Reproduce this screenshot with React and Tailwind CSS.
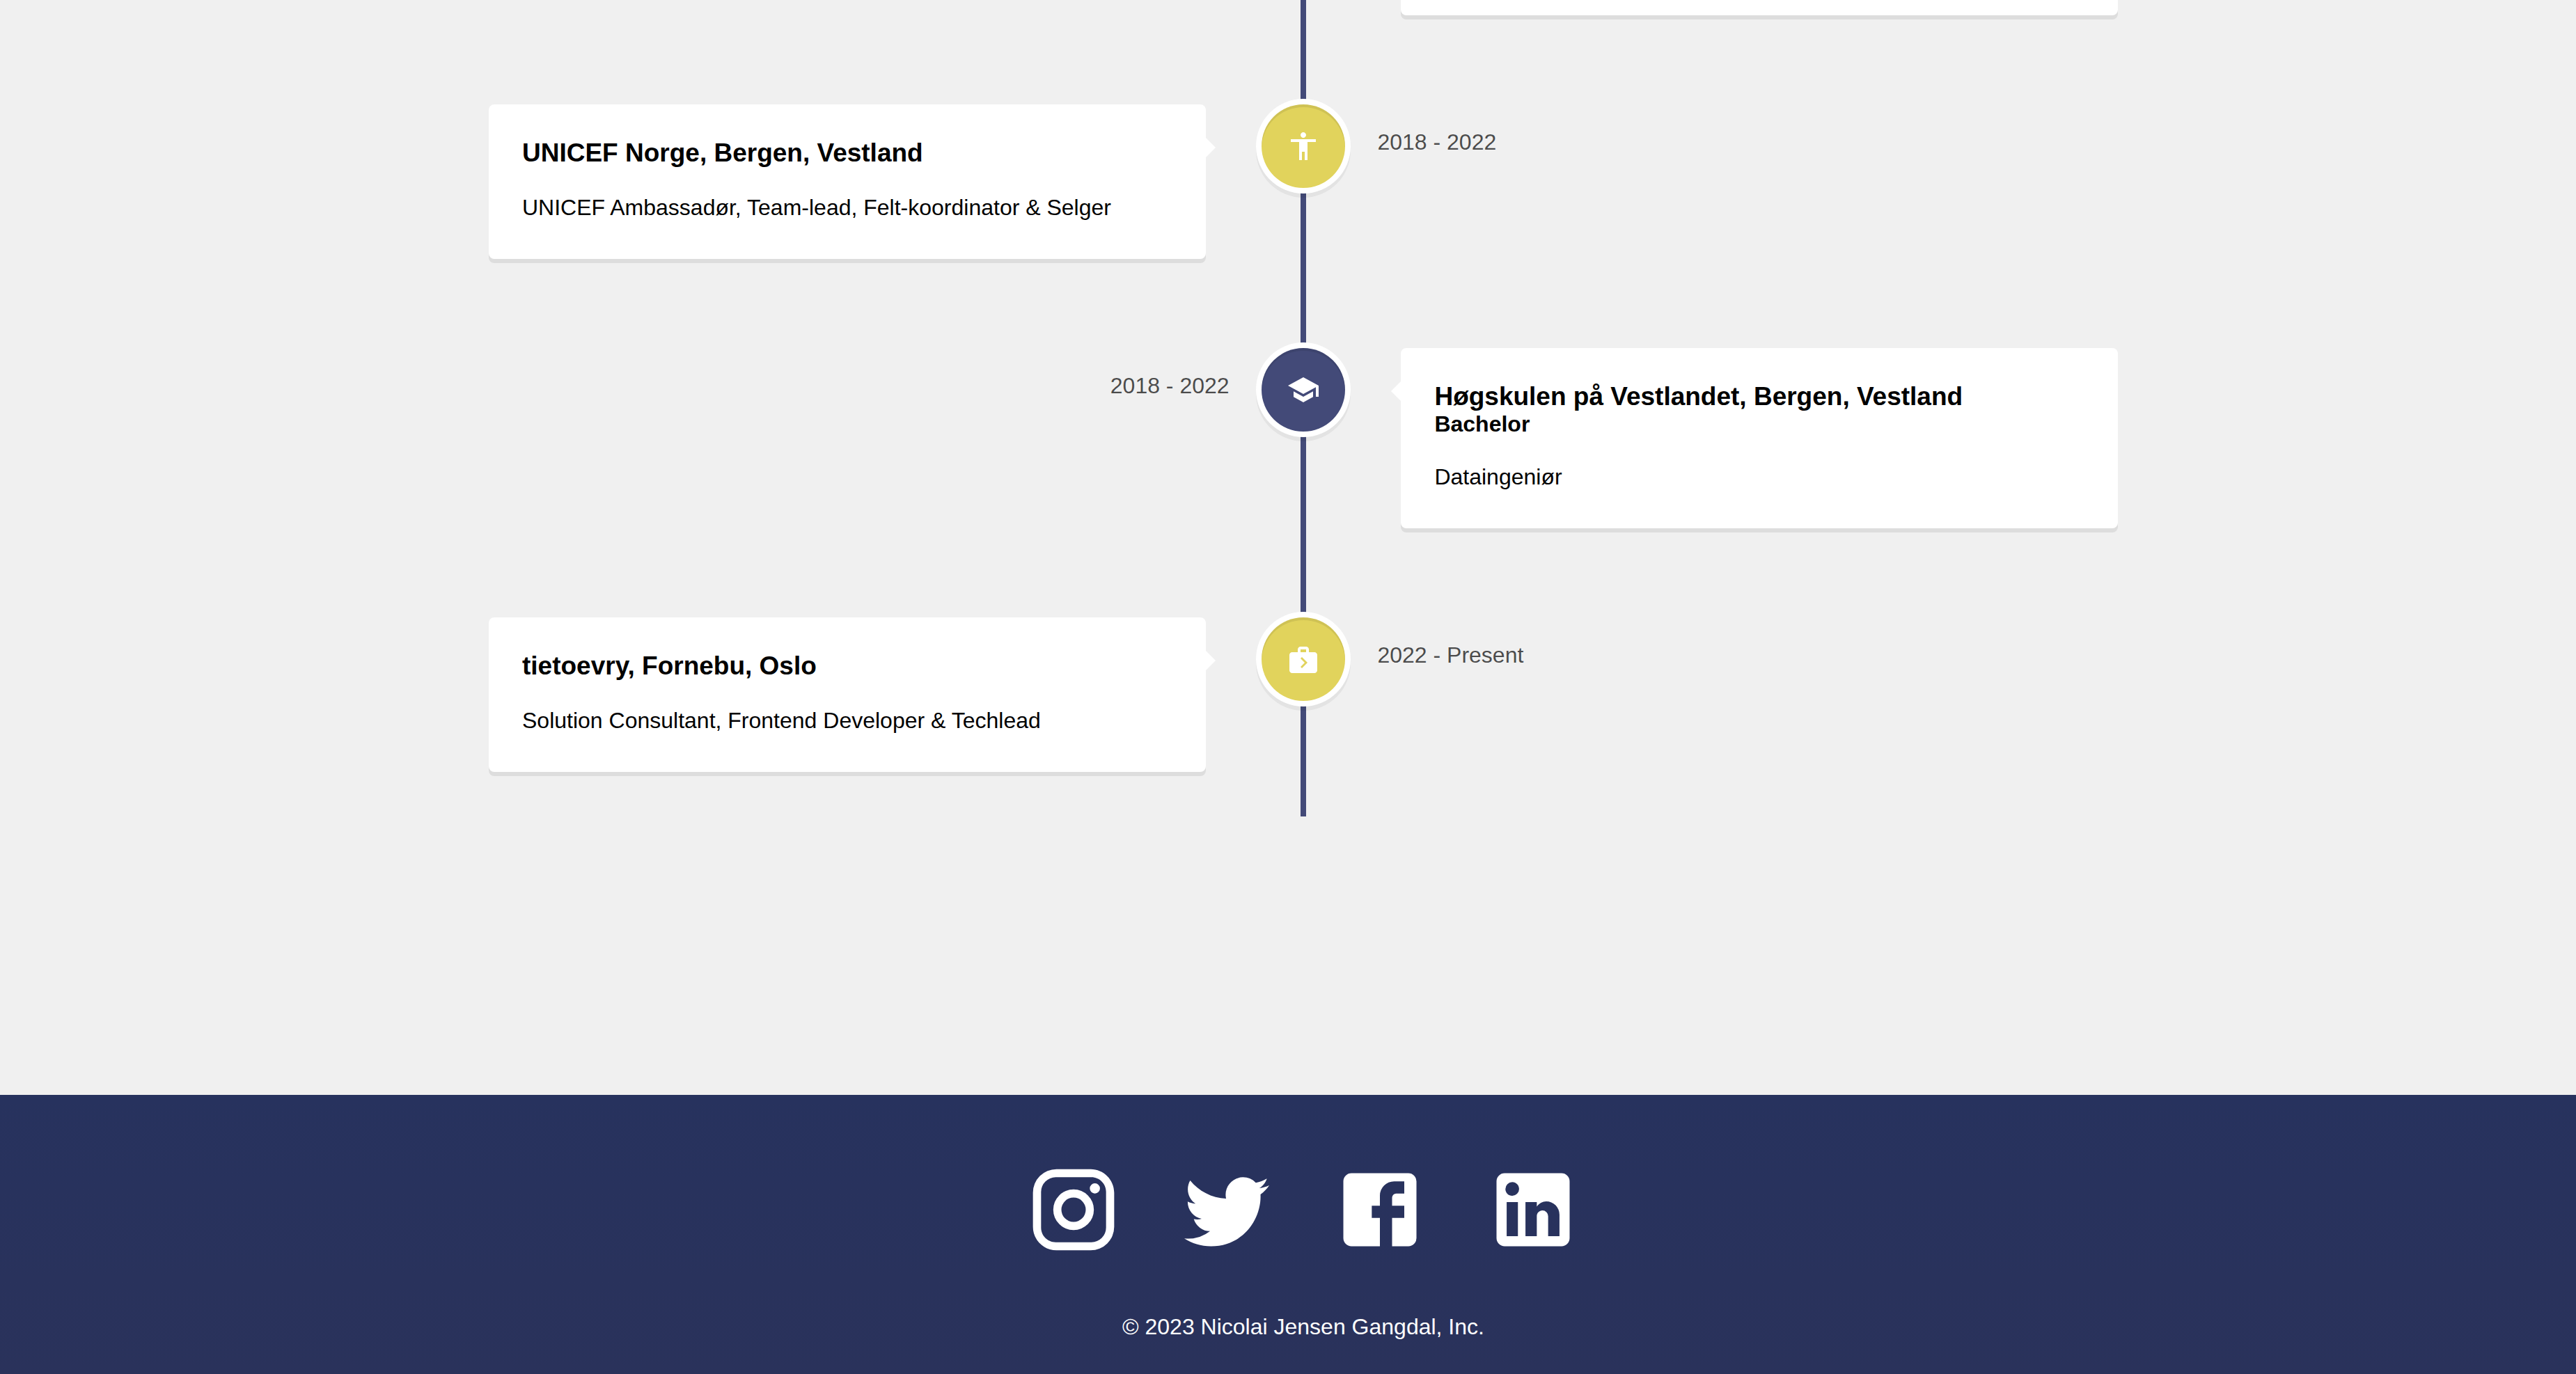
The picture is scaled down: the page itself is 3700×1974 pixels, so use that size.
const entries = [
  {
    side: "left",
    title: "UNICEF Norge, Bergen, Vestland",
    text: "UNICEF Ambassadør, Team-lead, Felt-koordinator & Selger",
    date: "2018 - 2022",
    color: "bg-[#e1d35c]",
    icon: "M12 2c1.1 0 2 .9 2 2s-.9 2-2 2-2-.9-2-2 .9-2 2-2zm9 7h-6v13h-2v-6h-2v6H9V9H3V7h18v2z",
  },
  {
    side: "right",
    title: "Høgskulen på Vestlandet, Bergen, Vestland",
    subtitle: "Bachelor",
    text: "Dataingeniør",
    date: "2018 - 2022",
    color: "bg-[#434a78]",
    icon: "M5 13.18v4L12 21l7-3.82v-4L12 17l-7-3.82zM12 3L1 9l11 6 9-4.91V17h2V9L12 3z",
  },
  {
    side: "left",
    title: "tietoevry, Fornebu, Oslo",
    text: "Solution Consultant, Frontend Developer & Techlead",
    date: "2022 - Present",
    color: "bg-[#e1d35c]",
    icon: "M20 7h-4V5c0-.55-.22-1.05-.59-1.41C15.05 3.22 14.55 3 14 3h-4c-1.1 0-2 .9-2 2v2H4c-1.1 0-2 .9-2 2v11c0 1.1.9 2 2 2h16c1.1 0 2-.9 2-2V9c0-1.1-.9-2-2-2zM10 5h4v2h-4V5zm1 13.5-1-1 3-3-3-3 1-1 4 4-4 4z",
  },
];

const socials = [
  {
    label: "Instagram",
    path: "M7.8 2h8.4C19.4 2 22 4.6 22 7.8v8.4a5.8 5.8 0 0 1-5.8 5.8H7.8C4.6 22 2 19.4 2 16.2V7.8A5.8 5.8 0 0 1 7.8 2m-.2 2A3.6 3.6 0 0 0 4 7.6v8.8C4 18.39 5.61 20 7.6 20h8.8a3.6 3.6 0 0 0 3.6-3.6V7.6C20 5.61 18.39 4 16.4 4H7.6m9.65 1.5a1.25 1.25 0 0 1 1.25 1.25A1.25 1.25 0 0 1 17.25 8 1.25 1.25 0 0 1 16 6.75a1.25 1.25 0 0 1 1.25-1.25M12 7a5 5 0 0 1 5 5 5 5 0 0 1-5 5 5 5 0 0 1-5-5 5 5 0 0 1 5-5m0 2a3 3 0 0 0-3 3 3 3 0 0 0 3 3 3 3 0 0 0 3-3 3 3 0 0 0-3-3z",
  },
  {
    label: "Twitter",
    path: "M22.46 6c-.77.35-1.6.58-2.46.69.88-.53 1.56-1.37 1.88-2.38-.83.5-1.75.85-2.72 1.05C18.37 4.5 17.26 4 16 4c-2.35 0-4.27 1.92-4.27 4.29 0 .34.04.67.11.98C8.28 9.09 5.11 7.38 3 4.79c-.37.63-.58 1.37-.58 2.15 0 1.49.75 2.81 1.91 3.56-.71 0-1.37-.2-1.95-.5v.03c0 2.08 1.48 3.82 3.44 4.21a4.22 4.22 0 0 1-1.93.07 4.28 4.28 0 0 0 4 2.98 8.521 8.521 0 0 1-5.33 1.84c-.34 0-.68-.02-1.02-.06C3.44 20.29 5.7 21 8.12 21 16 21 20.33 14.46 20.33 8.79c0-.19 0-.37-.01-.56.84-.6 1.56-1.36 2.14-2.23z",
  },
  {
    label: "Facebook",
    path: "M5 3h14a2 2 0 0 1 2 2v14a2 2 0 0 1-2 2H5a2 2 0 0 1-2-2V5a2 2 0 0 1 2-2m13 2h-2.5A3.5 3.5 0 0 0 12 8.5V11h-2v3h2v7h3v-7h3v-3h-3V9a1 1 0 0 1 1-1h2V5z",
  },
  {
    label: "LinkedIn",
    path: "M19 3a2 2 0 0 1 2 2v14a2 2 0 0 1-2 2H5a2 2 0 0 1-2-2V5a2 2 0 0 1 2-2h14m-.5 15.5v-5.3a3.26 3.26 0 0 0-3.26-3.26c-.85 0-1.84.52-2.32 1.3v-1.11h-2.79v8.37h2.79v-4.93c0-.77.62-1.4 1.39-1.4a1.4 1.4 0 0 1 1.4 1.4v4.93h2.79M6.88 8.56a1.68 1.68 0 0 0 1.68-1.68c0-.93-.75-1.69-1.68-1.69a1.69 1.69 0 0 0-1.69 1.69c0 .93.76 1.68 1.69 1.68m1.39 9.94v-8.37H5.5v8.37h2.77z",
  },
];

function Card({ entry }) {
  const arrow =
    entry.side === "left"
      ? "left-full border-l-white"
      : "right-full border-r-white";
  return (
    <article className="relative rounded-lg bg-white p-12 shadow-[0_6px_0_#ddd]">
      <span className={`absolute top-12 border-14 border-transparent ${arrow}`} />
      <h3 className="text-[37px] leading-[43px] font-bold">{entry.title}</h3>
      {entry.subtitle && (
        <h4 className="text-[32px] leading-[37px] font-bold">{entry.subtitle}</h4>
      )}
      <p className="mt-8 text-[32px] leading-[51px]">{entry.text}</p>
    </article>
  );
}

/* Date beside the marker, on the side opposite the card. */
function DateLabel({ entry }) {
  return (
    <p
      className={`pt-[30px] text-[32px] leading-[48px] text-black/70 ${
        entry.side === "left" ? "-ml-[34px] text-left" : "-mr-[34px] text-right"
      }`}
    >
      {entry.date}
    </p>
  );
}

function TimelineRow({ entry }) {
  const left = entry.side === "left";
  return (
    <li className="grid grid-cols-[44%_1fr_44%] items-start">
      {left ? <Card entry={entry} /> : <DateLabel entry={entry} />}
      <span
        className={`flex size-[120px] items-center justify-center justify-self-center rounded-full text-white shadow-[0_0_0_8px_#fff,inset_0_4px_0_rgba(0,0,0,0.08),0_6px_0_8px_rgba(0,0,0,0.05)] ${entry.color}`}
      >
        <svg viewBox="0 0 24 24" className="size-12" fill="currentColor" aria-hidden="true">
          <path d={entry.icon} />
        </svg>
      </span>
      {left ? <DateLabel entry={entry} /> : <Card entry={entry} />}
    </li>
  );
}

export default function App() {
  return (
    <div className="flex min-h-screen flex-col bg-[#f0f0f0] font-['Liberation_Sans',Arial,sans-serif] text-black">
      <main className="grow pb-[400px] pl-11">
        <section className="relative mx-auto max-w-[2340px] pb-16">
          <div className="absolute inset-y-0 left-1/2 w-2 -translate-x-1/2 bg-[#434a78]" />
          <div className="relative mb-32 ml-auto h-[22px] w-[44%] rounded-b-lg bg-white shadow-[0_6px_0_#ddd]" />
          <ol className="relative flex flex-col gap-32">
            {entries.map((entry) => (
              <TimelineRow key={entry.title} entry={entry} />
            ))}
          </ol>
        </section>
      </main>
      <footer className="bg-linear-to-b from-[#27325e] to-[#2a325b] pt-[95px] pb-[49px] pl-11 text-white">
        <nav aria-label="Social media" className="flex justify-center gap-20">
          {socials.map((social) => (
            <a key={social.label} href="#" aria-label={social.label}>
              <svg viewBox="0 0 24 24" className="size-[140px]" fill="currentColor" aria-hidden="true">
                <path d={social.path} />
              </svg>
            </a>
          ))}
        </nav>
        <p className="mt-20 text-center text-[32px] leading-[37px]">
          © 2023 Nicolai Jensen Gangdal, Inc.
        </p>
      </footer>
    </div>
  );
}
